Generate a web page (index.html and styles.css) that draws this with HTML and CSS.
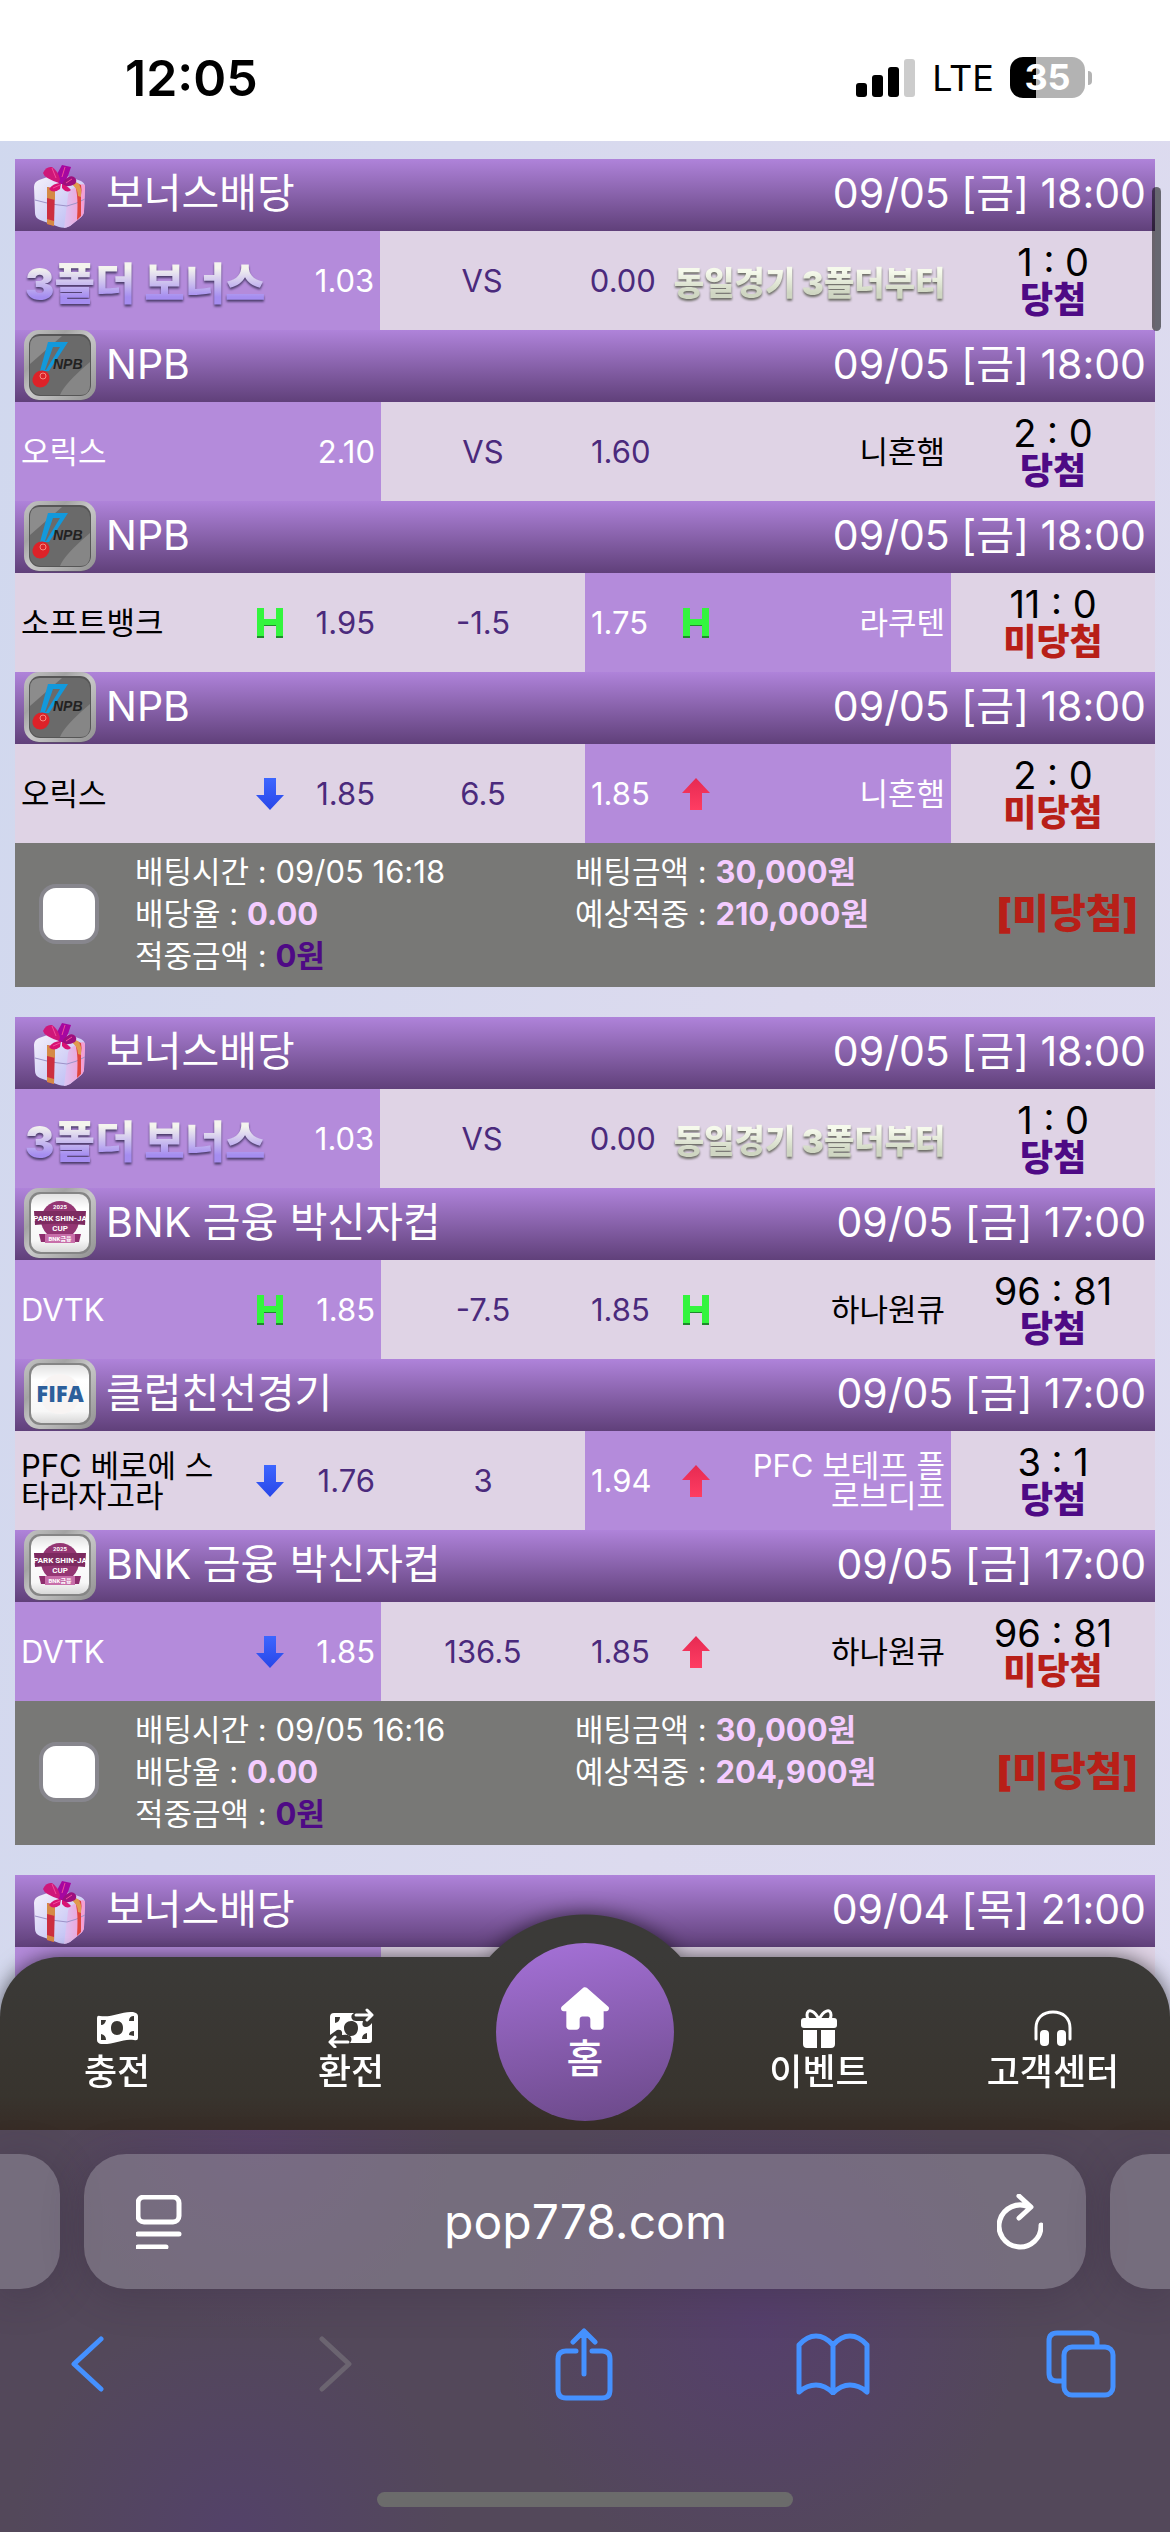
FILE: index.html
```html
<!DOCTYPE html>
<html lang="ko">
<head>
<meta charset="utf-8">
<meta name="viewport" content="width=device-width, initial-scale=1">
<title>배팅내역</title>
<link rel="stylesheet" href="styles.css">
</head>
<body>
<svg class="sprite" aria-hidden="true">
  <defs>
    <linearGradient id="box-left" x1="0" y1="0" x2="1" y2="1"><stop offset="0" stop-color="#f6f2fb"/><stop offset="1" stop-color="#b5b6f3"/></linearGradient>
    <linearGradient id="box-right" x1="0" y1="0" x2="1" y2="0"><stop offset="0" stop-color="#d9c4f3"/><stop offset="1" stop-color="#f79ad0"/></linearGradient>
    <linearGradient id="frame" x1="0" y1="0" x2="1" y2="1"><stop offset="0" stop-color="#c4c4c4"/><stop offset=".3" stop-color="#a3a3a3"/><stop offset=".5" stop-color="#c9c9c9"/><stop offset="1" stop-color="#8f8f8f"/></linearGradient>
    <linearGradient id="white-face" x1="0" y1="0" x2="0" y2="1"><stop offset="0" stop-color="#e2e2e2"/><stop offset=".25" stop-color="#fff"/><stop offset=".8" stop-color="#f7f7f7"/><stop offset="1" stop-color="#d8d8d8"/></linearGradient>
    <linearGradient id="blue-arrow" x1="0" y1="0" x2="0" y2="1"><stop offset="0" stop-color="#3d66ff"/><stop offset="1" stop-color="#2846e8"/></linearGradient>
    <linearGradient id="red-arrow" x1="0" y1="0" x2="0" y2="1"><stop offset="0" stop-color="#e62a52"/><stop offset="1" stop-color="#ff3d62"/></linearGradient>
  </defs>
  <symbol id="gift" viewBox="0 0 72 72">
    <path d="M10 28Q10 23 15 21L32 15Q36 14 40 16L57 22Q61 24 61 28L60 52Q60 56 56 59L46 67Q41 70 35 68L16 61Q11 59 11 54Z" fill="url(#box-left)"/>
    <path d="M44 36Q45 31 50 29L58 25Q61 25 61 28L60 52Q60 56 56 59L46 67Q42 69 40 69Z" fill="url(#box-right)"/>
    <path d="M11 41Q27 46 43 47Q52 45 61 40" fill="none" stroke="#9d92c8" stroke-width="1"/>
    <path d="M23 28L31 30L30 67L23 65Z" fill="#cc2e3f"/><path d="M23 28L31 30V41L23 39ZM23 60L30 62V67L23 65Z" fill="#d58a46"/>
    <path d="M51 23L57 26Q58 30 57 36L57 57L53 61Q54 45 53 36Z" fill="#e0453c"/><path d="M47 22L54 24Q58 28 57 38L54 37Q54 29 47 25Z" fill="#e09a4c"/>
    <path d="M35 25L32 17L38 6L47 8L44 17L40 25Z" fill="#a607a0"/>
    <path d="M35 24Q20 19 19 14Q22 7 28 8Q34 12 36 20Z" fill="#cf1779"/>
    <path d="M38 25Q44 15 50 18Q54 21 51 25Q46 28 39 27Z" fill="#9d0f7e"/>
    <path d="M37 24Q29 24 25 30Q29 35 36 30ZM38 25Q44 27 47 31Q43 35 38 29Z" fill="#d81272"/>
    <path d="M28 9L32 19M41 8L38 18M29 29L36 26M48 20L42 24" stroke="#f24a9c" stroke-width="1" fill="none"/>
  </symbol>
  <symbol id="npb" viewBox="0 0 72 72">
    <rect x="1" y="2" width="70" height="69" rx="15" fill="#5a5266" opacity=".6"/>
    <rect width="72" height="70" rx="15" fill="url(#frame)"/>
    <rect x="5" y="4" width="62" height="62" rx="11" fill="#565656"/>
    <rect x="6" y="6" width="60" height="59" rx="10" fill="#6a6a6a"/>
    <path d="M6 34V16Q6 6 16 6H38Z" fill="#8c8c8c"/><path d="M36 65Q40 54 66 32V55Q66 65 56 65Z" fill="#868686"/>
    <path d="M24 12H44L25 41H16ZM29 17L21 40H22L36 17Z" fill="#1299dc" fill-rule="evenodd"/>
    <ellipse cx="17" cy="49" rx="9" ry="8" transform="rotate(-40 17 49)" fill="#dd2228"/><circle cx="19" cy="46" r="3" fill="none" stroke="#f58a80" stroke-width="1"/>
    <text x="29" y="39" class="npb-word">NPB</text>
  </symbol>
  <symbol id="white-tile" viewBox="0 0 72 72">
    <rect x="1" y="2" width="70" height="69" rx="15" fill="#5a5266" opacity=".6"/>
    <rect width="72" height="70" rx="15" fill="url(#frame)"/>
    <rect x="5" y="4" width="62" height="62" rx="11" fill="#858585"/>
    <rect x="7" y="6" width="58" height="58" rx="10" fill="url(#white-face)"/>
  </symbol>
  <symbol id="bnk" viewBox="0 0 72 72">
    <use href="#white-tile"/>
    <circle cx="36" cy="32" r="19" fill="#943673"/>
    <path d="M10 23H62L61 37Q36 34 11 37Z" fill="#7d2a60"/>
    <path d="M15 46H21V52H51V46H57L55 54H17Z" fill="#8e2d6d"/><rect x="21" y="46" width="30" height="9" fill="#c86ea9"/>
    <text x="36" y="21" class="bnk-year">2025</text>
    <text x="36" y="33" class="bnk-name">PARK SHIN-JA</text>
    <text x="36" y="43" class="bnk-name">CUP</text>
    <text x="36" y="53" class="bnk-year">BNK금융</text>
  </symbol>
  <symbol id="fifa" viewBox="0 0 72 72">
    <use href="#white-tile"/>
    <circle cx="36" cy="35" r="20" fill="#f8f4f3"/>
    <text x="36" y="43" class="fifa-word">FIFA</text>
  </symbol>
  <symbol id="handi" viewBox="0 0 28 32"><path d="M1 2H8V13H20V2H27V31H20V19H8V31H1Z" fill="#1e8a2b"/><path d="M1 1H8V12H20V1H27V29H20V18H8V29H1Z" fill="#33f53e"/></symbol>
  <symbol id="down" viewBox="0 0 28 32"><path d="M8 0H20V17H28L14 32L0 17H8Z" fill="url(#blue-arrow)"/></symbol>
  <symbol id="up" viewBox="0 0 28 32"><path d="M8 32H20V15H28L14 0L0 15H8Z" fill="url(#red-arrow)"/></symbol>
</svg>

<header class="status">
  <time class="clock">12:05</time>
  <div class="status-right">
    <svg class="signal" viewBox="0 0 60 38" aria-hidden="true"><rect y="24" width="11" height="14" rx="3"/><rect x="16" y="16" width="11" height="22" rx="3"/><rect x="32" y="8" width="11" height="30" rx="3"/><rect x="48" width="11" height="38" rx="3" fill="#ccc"/></svg>
    <span class="network">LTE</span>
    <span class="battery">35</span>
  </div>
</header>

<main class="list">
  <article class="slip">
    <h2 class="league"><svg class="mark" aria-hidden="true"><use href="#gift"/></svg><span class="name">보너스배당</span><time>09/05 [금] 18:00</time></h2>
    <div class="match">
      <div class="side picked"><span class="bonus">3폴더 보너스</span><span class="odds">1.03</span></div>
      <div class="line">VS</div>
      <div class="side away"><span class="odds">0.00</span><span class="bonus note">동일경기 3폴더부터</span></div>
      <div class="result"><span class="score">1 : 0</span><strong class="win">당첨</strong></div>
    </div>
    <h2 class="league"><svg class="mark" aria-hidden="true"><use href="#npb"/></svg><span class="name">NPB</span><time>09/05 [금] 18:00</time></h2>
    <div class="match">
      <div class="side picked"><span class="team">오릭스</span><span class="odds">2.10</span></div>
      <div class="line">VS</div>
      <div class="side away"><span class="odds">1.60</span><span class="team">니혼햄</span></div>
      <div class="result"><span class="score">2 : 0</span><strong class="win">당첨</strong></div>
    </div>
    <h2 class="league"><svg class="mark" aria-hidden="true"><use href="#npb"/></svg><span class="name">NPB</span><time>09/05 [금] 18:00</time></h2>
    <div class="match">
      <div class="side"><span class="team">소프트뱅크</span><svg class="kind" aria-hidden="true"><use href="#handi"/></svg><span class="odds">1.95</span></div>
      <div class="line">-1.5</div>
      <div class="side away picked"><span class="odds">1.75</span><svg class="kind" aria-hidden="true"><use href="#handi"/></svg><span class="team">라쿠텐</span></div>
      <div class="result"><span class="score">11 : 0</span><strong class="lose">미당첨</strong></div>
    </div>
    <h2 class="league"><svg class="mark" aria-hidden="true"><use href="#npb"/></svg><span class="name">NPB</span><time>09/05 [금] 18:00</time></h2>
    <div class="match">
      <div class="side"><span class="team">오릭스</span><svg class="kind" aria-hidden="true"><use href="#down"/></svg><span class="odds">1.85</span></div>
      <div class="line">6.5</div>
      <div class="side away picked"><span class="odds">1.85</span><svg class="kind" aria-hidden="true"><use href="#up"/></svg><span class="team">니혼햄</span></div>
      <div class="result"><span class="score">2 : 0</span><strong class="lose">미당첨</strong></div>
    </div>
    <footer class="summary">
      <input type="checkbox" class="pick" aria-label="배팅 선택">
      <ul><li>배팅시간 : 09/05 16:18</li><li>배당율 : <b>0.00</b></li><li>적중금액 : <b class="paid">0원</b></li></ul>
      <ul><li>배팅금액 : <b>30,000원</b></li><li>예상적중 : <b>210,000원</b></li></ul>
      <strong class="outcome">[미당첨]</strong>
    </footer>
  </article>

  <article class="slip">
    <h2 class="league"><svg class="mark" aria-hidden="true"><use href="#gift"/></svg><span class="name">보너스배당</span><time>09/05 [금] 18:00</time></h2>
    <div class="match">
      <div class="side picked"><span class="bonus">3폴더 보너스</span><span class="odds">1.03</span></div>
      <div class="line">VS</div>
      <div class="side away"><span class="odds">0.00</span><span class="bonus note">동일경기 3폴더부터</span></div>
      <div class="result"><span class="score">1 : 0</span><strong class="win">당첨</strong></div>
    </div>
    <h2 class="league"><svg class="mark" aria-hidden="true"><use href="#bnk"/></svg><span class="name">BNK 금융 박신자컵</span><time>09/05 [금] 17:00</time></h2>
    <div class="match">
      <div class="side picked"><span class="team">DVTK</span><svg class="kind" aria-hidden="true"><use href="#handi"/></svg><span class="odds">1.85</span></div>
      <div class="line">-7.5</div>
      <div class="side away"><span class="odds">1.85</span><svg class="kind" aria-hidden="true"><use href="#handi"/></svg><span class="team">하나원큐</span></div>
      <div class="result"><span class="score">96 : 81</span><strong class="win">당첨</strong></div>
    </div>
    <h2 class="league"><svg class="mark" aria-hidden="true"><use href="#fifa"/></svg><span class="name">클럽친선경기</span><time>09/05 [금] 17:00</time></h2>
    <div class="match">
      <div class="side"><span class="team">PFC 베로에 스타라자고라</span><svg class="kind" aria-hidden="true"><use href="#down"/></svg><span class="odds">1.76</span></div>
      <div class="line">3</div>
      <div class="side away picked"><span class="odds">1.94</span><svg class="kind" aria-hidden="true"><use href="#up"/></svg><span class="team">PFC 보테프 플로브디프</span></div>
      <div class="result"><span class="score">3 : 1</span><strong class="win">당첨</strong></div>
    </div>
    <h2 class="league"><svg class="mark" aria-hidden="true"><use href="#bnk"/></svg><span class="name">BNK 금융 박신자컵</span><time>09/05 [금] 17:00</time></h2>
    <div class="match">
      <div class="side picked"><span class="team">DVTK</span><svg class="kind" aria-hidden="true"><use href="#down"/></svg><span class="odds">1.85</span></div>
      <div class="line">136.5</div>
      <div class="side away"><span class="odds">1.85</span><svg class="kind" aria-hidden="true"><use href="#up"/></svg><span class="team">하나원큐</span></div>
      <div class="result"><span class="score">96 : 81</span><strong class="lose">미당첨</strong></div>
    </div>
    <footer class="summary">
      <input type="checkbox" class="pick" aria-label="배팅 선택">
      <ul><li>배팅시간 : 09/05 16:16</li><li>배당율 : <b>0.00</b></li><li>적중금액 : <b class="paid">0원</b></li></ul>
      <ul><li>배팅금액 : <b>30,000원</b></li><li>예상적중 : <b>204,900원</b></li></ul>
      <strong class="outcome">[미당첨]</strong>
    </footer>
  </article>

  <article class="slip">
    <h2 class="league"><svg class="mark" aria-hidden="true"><use href="#gift"/></svg><span class="name">보너스배당</span><time>09/04 [목] 21:00</time></h2>
    <div class="match"><div class="side picked"></div></div>
  </article>
</main>
<div class="scroll-thumb"></div>

<div class="dock">
  <nav class="tabs">
    <a href="#charge"><svg width="42" height="32" viewBox="0 0 42 32" aria-hidden="true"><path fill="#fff" fill-rule="evenodd" d="M1 6Q1 3 4 4C16 6 25-1 37 0Q42 1 42 4V26Q42 29 38 28C27 26 18 33 5 32Q1 31 1 28ZM21 9C17 9 15 12 15 16S17 23 21 23S27 20 27 16S25 9 21 9ZM5 8V13Q9 13 10 8ZM38 4Q33 4 33 9H38ZM5 22V28H10Q10 23 5 22ZM38 19Q33 19 33 23L38 24Z"/></svg>충전</a>
    <a href="#exchange"><svg width="46" height="40" viewBox="0 0 46 40" aria-hidden="true"><path fill="#fff" fill-rule="evenodd" d="M6 5H26Q22 7 24 11Q25 13 28 13H35Q33 19 38 19Q41 19 44 15V32Q44 35 41 35H22Q25 31 22 28Q20 26 14 27Q15 21 9 22L2 27V9Q2 5 6 5ZM23 13C19 13 16 16 16 20S19 28 23 28S30 25 30 20S27 13 23 13ZM7 9V15Q12 14 12 9ZM39 31V25Q34 26 34 31Z"/><path d="M28 7H44M39 2L44 7L39 12M20 34H2M7 29L2 34L7 39" fill="none" stroke="#fff" stroke-width="3" stroke-linecap="round" stroke-linejoin="round"/></svg>환전</a>
    <a href="#home" class="home"><svg width="48" height="43" viewBox="0 0 576 512" aria-hidden="true"><path fill="#fff" d="M575.800 255.500c0 18-15 32.100-32 32.100h-32l.7 160.200c0 2.700-.2 5.400-.5 8.100V472c0 22.100-17.900 40-40 40H392c-22.100 0-40-17.900-40-40v-88c0-17.700-14.300-32-32-32h-64c-17.700 0-32 14.300-32 32v88c0 22.100-17.900 40-40 40h-80c-22.100 0-40-17.900-40-40V287.600H32c-18 0-32-14-32-32.100 0-9 3-17 10-24L266.400 8c7-7 15-8 22-8s15 2 21 7l255.400 224.500c8 7 12 15 11 24z"/></svg>홈</a>
    <a href="#event"><svg width="36" height="40" viewBox="0 0 36 40" aria-hidden="true"><path d="M18 12C14 2 6 0 6 7Q6 12 10 12H26Q30 12 30 7C30 0 22 2 18 12Z" fill="none" stroke="#fff" stroke-width="3"/><rect y="10" width="36" height="10" rx="3" fill="#fff"/><path d="M2 22H16V40H6Q2 40 2 36ZM20 22H34V36Q34 40 30 40H20Z" fill="#fff"/></svg>이벤트</a>
    <a href="#support"><svg width="38" height="36" viewBox="0 0 38 36" aria-hidden="true"><path d="M2 29V18C2 8 9 2 19 2S36 8 36 18V29" fill="none" stroke="#fff" stroke-width="3" stroke-linecap="round"/><rect x="6" y="20" width="9" height="16" rx="4" fill="#fff"/><rect x="23" y="20" width="9" height="16" rx="4" fill="#fff"/></svg>고객센터</a>
  </nav>
  <div class="browser">
    <div class="address-row">
      <div class="peek left"></div>
      <div class="address">
        <button type="button" aria-label="페이지 메뉴"><svg width="46" height="54" viewBox="0 0 46 54"><rect x="2" y="2" width="41" height="25" rx="6"/><path d="M2 39H43M2 52H30"/></svg></button>
        <input type="text" value="pop778.com" aria-label="주소">
        <button type="button" aria-label="새로고침"><svg width="46" height="56" viewBox="0 0 46 56"><path d="M44 31A21 21 0 1 1 32 13M22 2L34 13L22 24"/></svg></button>
      </div>
      <div class="peek right"></div>
    </div>
    <div class="tools">
      <button type="button" aria-label="뒤로"><svg width="34" height="56" viewBox="0 0 34 56"><path d="M31 3L4 28L31 53"/></svg></button>
      <button type="button" aria-label="앞으로" disabled><svg width="34" height="56" viewBox="0 0 34 56"><path d="M3 3L30 28L3 53"/></svg></button>
      <button type="button" aria-label="공유"><svg width="58" height="74" viewBox="0 0 58 74"><path d="M21 24H11Q3 24 3 32V63Q3 71 11 71H47Q55 71 55 63V32Q55 24 47 24H37M29 47V4M18 15L29 4L40 15"/></svg></button>
      <button type="button" aria-label="책갈피"><svg width="74" height="62" viewBox="0 0 74 62"><path d="M37 12Q29 3 20 3T3 12V59Q11 52 20 52T37 60Q45 52 54 52T71 59V12Q63 3 54 3T37 12V60"/></svg></button>
      <button type="button" aria-label="탭"><svg width="70" height="68" viewBox="0 0 70 68"><path d="M17 51H11Q3 51 3 43V11Q3 3 11 3H43Q51 3 51 11V16"/><rect x="18" y="17" width="49" height="48" rx="8"/></svg></button>
    </div>
    <div class="home-indicator"></div>
  </div>
</div>
</body>
</html>
```
FILE: styles.css
```css
* { box-sizing: border-box; }
body {
  margin: 0;
  font-family: Inter, "Noto Sans CJK KR", sans-serif;
  color: #000;
  background: linear-gradient(100deg, #d0d8ee, #dcdaee 60%, #dddcf1);
  min-height: 100vh;
}
h2, ul { margin: 0; padding: 0; font-weight: 400; list-style: none; }
a { color: inherit; text-decoration: none; }
button { background: none; border: 0; padding: 0; }
.sprite { position: absolute; width: 0; height: 0; }

.status {
  display: flex;
  align-items: center;
  justify-content: space-between;
  height: 141px;
  padding: 14px 85px 0 125px;
  background: #fff;
}
.clock { font-size: 50px; font-weight: 600; }
.status-right { display: flex; align-items: center; gap: 16px; }
.signal { width: 60px; height: 38px; }
.network { font-size: 36px; }
.battery {
  position: relative;
  width: 75px;
  height: 41px;
  border-radius: 13px;
  background: linear-gradient(90deg, #000 35%, #b3b3b3 35%);
  color: #fff;
  font-size: 36px;
  font-weight: 700;
  line-height: 41px;
  text-align: center;
}
.battery::after {
  content: "";
  position: absolute;
  left: 78px;
  top: 14px;
  width: 4px;
  height: 14px;
  border-radius: 0 4px 4px 0;
  background: #b3b3b3;
}

.list { display: flex; flex-direction: column; gap: 30px; padding: 18px 15px 0; }
.league {
  display: flex;
  align-items: center;
  height: 72px;
  padding: 0 9px;
  color: #fff;
  font-size: 41px;
  line-height: 68px;
  background: linear-gradient(#af83da, #60407a);
}
.mark { width: 72px; height: 72px; margin-right: 10px; }
.name, .league time { height: 72px; }
.name { flex: 1; }
.match {
  display: grid;
  grid-template-columns: 366fr 204fr 366fr 204fr;
  min-height: 99px;
  background: #dfd3e5;
  font-size: 31px;
}
.side { display: flex; align-items: center; padding: 0 6px; color: #4b2a7c; }
.side.picked { background: #b48bdb; color: #fff; }
.team {
  flex: 1;
  padding-right: 12px;
  color: #000;
  line-height: 30px;
  word-break: break-all;
}
.picked .team { color: #fff; }
.away .team { padding: 0 0 0 12px; }
.away .team, .note { text-align: right; }
.odds { width: 84px; text-align: right; }
.away .odds { text-align: left; }
.kind { width: 28px; height: 32px; margin: 0 7px; }
.line { display: flex; align-items: center; justify-content: center; color: #4b2a7c; }
.bonus {
  flex: 1;
  padding-left: 4px;
  font-size: 44px;
  font-weight: 900;
  white-space: nowrap;
  color: transparent;
  background: linear-gradient(#f4f4ee 30%, #a58df0 75%);
  background-clip: text;
  filter: drop-shadow(0 2px 1px #4b3c6b);
}
.note {
  padding: 0;
  font-size: 33px;
  background: linear-gradient(#f6faec 30%, #cfd6c2 75%);
  background-clip: text;
  filter: drop-shadow(0 2px 1px #6b6b64);
}
.result {
  display: flex;
  flex-direction: column;
  align-items: center;
  justify-content: center;
}
.score { font-size: 38px; line-height: 38px; }
.result strong { font-size: 36px; font-weight: 900; line-height: 38px; }
.win { color: #4e0a85; }
.lose, .outcome { color: #b81f18; }

.summary {
  display: grid;
  grid-template-columns: 96px 440px 1fr auto;
  align-items: center;
  padding: 8px 17px 10px 24px;
  background: #787876;
  color: #fff;
  font-size: 31px;
  line-height: 42px;
}
.summary ul { align-self: start; }
.summary b { color: #f4ccff; }
.summary .paid { color: #4e0a85; }
.pick {
  appearance: none;
  width: 60px;
  height: 60px;
  margin: 0;
  border: 4px solid #87868d;
  border-radius: 17px;
  background: #fff;
}
.outcome { font-size: 40px; font-weight: 900; }

.scroll-thumb {
  position: absolute;
  top: 187px;
  right: 9px;
  width: 9px;
  height: 144px;
  border-radius: 5px;
  background: rgba(0, 0, 0, .53);
}

.dock { position: fixed; left: 0; right: 0; bottom: 0; color: #fff; }
.tabs {
  position: relative;
  display: grid;
  grid-template-columns: repeat(5, 1fr);
  height: 173px;
  border-radius: 60px 60px 0 0;
  background: linear-gradient(#3b3a38, #38342e 80%, #372c26);
  filter: drop-shadow(0 0 10px rgba(0, 0, 0, .6));
}
.tabs::before {
  content: "";
  position: absolute;
  bottom: 100%;
  left: calc(50% - 97px);
  width: 194px;
  height: 43px;
  background: radial-gradient(circle at 50% 129px, #3b3a38 128px, transparent 129px);
}
.tabs a {
  display: flex;
  flex-direction: column;
  align-items: center;
  padding-top: 51px;
  font-size: 36px;
  font-weight: 500;
  line-height: 48px;
}
.tabs a svg { height: 40px; }
.tabs .home {
  position: relative;
  justify-self: center;
  width: 178px;
  height: 178px;
  margin-top: -14px;
  padding-top: 44px;
  border-radius: 50%;
  background: linear-gradient(170deg, #a672d9, #6a4887);
  font-size: 40px;
  line-height: 58px;
}
.tabs .home svg { height: 43px; }

.browser {
  position: relative;
  height: 402px;
  padding-top: 24px;
  background:
    radial-gradient(circle at 22% 0, rgba(91, 65, 110, .7), transparent 200px),
    radial-gradient(circle at 65% 48%, rgba(86, 61, 112, .8), transparent 260px),
    radial-gradient(circle at 20% 100%, rgba(83, 64, 108, .8), transparent 220px),
    #53485a;
}
.address-row { display: flex; gap: 24px; height: 135px; }
.peek { width: 60px; background: rgba(151, 145, 160, .5); }
.peek.left { border-radius: 0 40px 40px 0; }
.peek.right { border-radius: 40px 0 0 40px; }
.address, .peek { box-shadow: 0 6px 40px rgba(50, 35, 60, .3); }
.address {
  flex: 1;
  display: flex;
  align-items: center;
  min-width: 0;
  padding: 0 43px 0 52px;
  border-radius: 42px;
  background: rgba(151, 145, 160, .5);
}
.address input {
  flex: 1;
  min-width: 0;
  border: 0;
  padding: 0 8px 0 0;
  background: none;
  color: #fff;
  font: 48px Inter, sans-serif;
  text-align: center;
}
.browser svg {
  display: block;
  margin: 0 auto;
  fill: none;
  stroke: #fff;
  stroke-width: 5;
  stroke-linecap: round;
  stroke-linejoin: round;
}
.tools {
  display: flex;
  align-items: center;
  justify-content: space-between;
  height: 74px;
  margin-top: 38px;
  padding: 0 52px 0 50px;
}
.tools button { width: 74px; }
.tools svg { stroke: #4591ff; }
.tools :disabled svg { stroke: #6b6470; }
.home-indicator {
  width: 416px;
  height: 15px;
  margin: 91px auto 0;
  border-radius: 8px;
  background: #6b6b6b;
}

.npb-word { font: italic 700 14px "Liberation Sans", sans-serif; fill: #222; }
.bnk-year { font: 700 6px Roboto, "Noto Sans CJK KR", sans-serif; fill: #fff; text-anchor: middle; }
.bnk-name { font: 700 8px Roboto, sans-serif; fill: #fff; text-anchor: middle; }
.fifa-word { font: 800 22px "Open Sans", sans-serif; fill: #2c5f9b; text-anchor: middle; }
```
